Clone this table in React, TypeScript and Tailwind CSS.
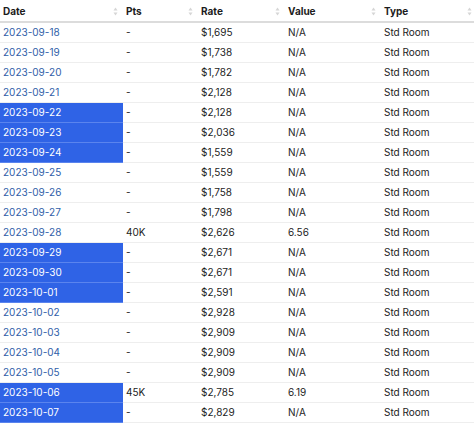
import React from 'react';

type Row = { date: string; pts: string; rate: string; value: string; type: string; sel?: boolean };

const ROWS: Row[] = [
  { date: '2023-09-18', pts: '-', rate: '$1,695', value: 'N/A', type: 'Std Room' },
  { date: '2023-09-19', pts: '-', rate: '$1,738', value: 'N/A', type: 'Std Room' },
  { date: '2023-09-20', pts: '-', rate: '$1,782', value: 'N/A', type: 'Std Room' },
  { date: '2023-09-21', pts: '-', rate: '$2,128', value: 'N/A', type: 'Std Room' },
  { date: '2023-09-22', pts: '-', rate: '$2,128', value: 'N/A', type: 'Std Room', sel: true },
  { date: '2023-09-23', pts: '-', rate: '$2,036', value: 'N/A', type: 'Std Room', sel: true },
  { date: '2023-09-24', pts: '-', rate: '$1,559', value: 'N/A', type: 'Std Room', sel: true },
  { date: '2023-09-25', pts: '-', rate: '$1,559', value: 'N/A', type: 'Std Room' },
  { date: '2023-09-26', pts: '-', rate: '$1,758', value: 'N/A', type: 'Std Room' },
  { date: '2023-09-27', pts: '-', rate: '$1,798', value: 'N/A', type: 'Std Room' },
  { date: '2023-09-28', pts: '40K', rate: '$2,626', value: '6.56', type: 'Std Room' },
  { date: '2023-09-29', pts: '-', rate: '$2,671', value: 'N/A', type: 'Std Room', sel: true },
  { date: '2023-09-30', pts: '-', rate: '$2,671', value: 'N/A', type: 'Std Room', sel: true },
  { date: '2023-10-01', pts: '-', rate: '$2,591', value: 'N/A', type: 'Std Room', sel: true },
  { date: '2023-10-02', pts: '-', rate: '$2,928', value: 'N/A', type: 'Std Room' },
  { date: '2023-10-03', pts: '-', rate: '$2,909', value: 'N/A', type: 'Std Room' },
  { date: '2023-10-04', pts: '-', rate: '$2,909', value: 'N/A', type: 'Std Room' },
  { date: '2023-10-05', pts: '-', rate: '$2,909', value: 'N/A', type: 'Std Room' },
  { date: '2023-10-06', pts: '45K', rate: '$2,785', value: '6.19', type: 'Std Room', sel: true },
  { date: '2023-10-07', pts: '-', rate: '$2,829', value: 'N/A', type: 'Std Room', sel: true },
];

function SortIcon() {
  return (
    <svg width="5" height="9" viewBox="0 0 5 9" className="shrink-0">
      <path d="M2.5 0.5 L4.5 3.6 L0.5 3.6 Z" fill="#d6d6d6" />
      <path d="M2.5 8.5 L4.5 5.4 L0.5 5.4 Z" fill="#d6d6d6" />
    </svg>
  );
}

const HEADERS = [
  { label: 'Date', w: 'w-[123px]' },
  { label: 'Pts', w: 'w-[75px]' },
  { label: 'Rate', w: 'w-[87px]' },
  { label: 'Value', w: 'w-[96px]' },
  { label: 'Type', w: 'w-[96px]' },
];

export default function App() {
  return (
    <div className="w-[474px] h-[423px] overflow-hidden bg-white text-[10px] text-[#1c1c1c] font-['Inter',sans-serif]">
      <div className="flex h-[23px] pt-[2px] border-b-2 border-[#dcdcdc]">
        {HEADERS.map(h => (
          <div key={h.label} className={`${h.w} shrink-0 flex items-center justify-between pl-[3px] pr-[5px] font-bold`}>
            <span>{h.label}</span>
            <SortIcon />
          </div>
        ))}
      </div>
      {ROWS.map(r => (
        <div key={r.date} className="flex h-[20px]">
          <div
            className={`w-[123px] shrink-0 flex items-center pl-[3px] border-b ${
              r.sel ? 'bg-[#2f63e6] text-white border-[#5a84ee]' : 'text-[#2f5ea8] border-[#eeeeee]'
            }`}
          >
            {r.date}
          </div>
          <div className="w-[75px] shrink-0 flex items-center pl-[3px] border-b border-[#eeeeee]">{r.pts}</div>
          <div className="w-[87px] shrink-0 flex items-center pl-[3px] border-b border-[#eeeeee]">{r.rate}</div>
          <div className="w-[96px] shrink-0 flex items-center pl-[3px] border-b border-[#eeeeee]">{r.value}</div>
          <div className="w-[96px] shrink-0 flex items-center pl-[3px] border-b border-[#eeeeee]">{r.type}</div>
        </div>
      ))}
    </div>
  );
}
